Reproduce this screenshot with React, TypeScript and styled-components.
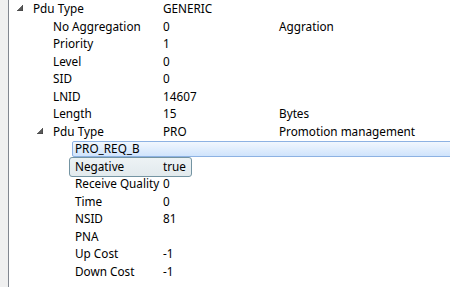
import styled, {createGlobalStyle, css} from "styled-components";

const GlobalStyle = createGlobalStyle`
  html, body {
    margin: 0;
    padding: 0;
    background: #fff;
  }
  body {
    font-family: "Noto Sans", "Open Sans", sans-serif;
    font-size: 11.75px;
    color: #000;
  }
`;

type Variant = "selected" | "focused";

interface Item {
  level: number;
  name: string;
  value?: string;
  desc?: string;
  expanded?: boolean;
  variant?: Variant;
}

const items: Item[] = [
  {level: 1, name: "Pdu Type", value: "GENERIC", expanded: true},
  {level: 2, name: "No Aggregation", value: "0", desc: "Aggration"},
  {level: 2, name: "Priority", value: "1"},
  {level: 2, name: "Level", value: "0"},
  {level: 2, name: "SID", value: "0"},
  {level: 2, name: "LNID", value: "14607"},
  {level: 2, name: "Length", value: "15", desc: "Bytes"},
  {level: 2, name: "Pdu Type", value: "PRO", desc: "Promotion management", expanded: true},
  {level: 3, name: "PRO_REQ_B", variant: "selected"},
  {level: 3, name: "Negative", value: "true", variant: "focused"},
  {level: 3, name: "Receive Quality", value: "0"},
  {level: 3, name: "Time", value: "0"},
  {level: 3, name: "NSID", value: "81"},
  {level: 3, name: "PNA"},
  {level: 3, name: "Up Cost", value: "-1"},
  {level: 3, name: "Down Cost", value: "-1"},
];

// label x position for each tree level, relative to the tree panel
const labelOffset: Record<number, number> = {1: 24, 2: 44, 3: 66};

const ExpandedArrow = () => (
  <svg width="6" height="6" viewBox="0 0 6 6">
    <path d="M6,0 L6,6 L0,6 Z" fill="#595959" stroke="#262626" strokeWidth="0.5"/>
  </svg>
);

export default function App() {
  return <Window>
    <GlobalStyle/>
    <Gutter/>
    <Tree>
      {items.map((item, i) => (
        <Row key={i} $variant={item.variant}>
          <NameCell $level={item.level}>
            <Expander>{item.expanded ? <ExpandedArrow/> : null}</Expander>
            <Label>{item.name}</Label>
          </NameCell>
          <Value>{item.value}</Value>
          <Desc>{item.desc}</Desc>
        </Row>
      ))}
    </Tree>
  </Window>
}

const Window = styled.div`
  display: flex;
  width: 450px;
  height: 287px;
  overflow: hidden;
  background: #fff;
`;

const Gutter = styled.div`
  width: 8px;
  flex: none;
  background: #f0f0f0;
  border-right: 1px solid #828790;
`;

const Tree = styled.div`
  flex: 1;
  display: flex;
  flex-direction: column;
`;

const selectedStyle = css`
  &::before {
    content: "";
    position: absolute;
    left: 63px;
    right: -4px;
    top: 1px;
    bottom: 0.5px;
    border: 1px solid #8db2e3;
    border-radius: 2px;
    background: linear-gradient(#f1f7fe, #d0e4fc);
  }
`;

const focusedStyle = css`
  &::before {
    content: "";
    position: absolute;
    left: 60px;
    width: 121px;
    top: -0.5px;
    bottom: -2px;
    border: 1px solid #7494a2;
    border-radius: 3px;
    background: linear-gradient(#edf3f5, #e2eaed);
  }
`;

const Row = styled.div<{ $variant?: Variant }>`
  position: relative;
  display: grid;
  grid-template-columns: 154px 116px 1fr;
  height: 17.5px;
  align-items: center;
  white-space: nowrap;
  line-height: 17.5px;
  ${p => p.$variant === "selected" && selectedStyle}
  ${p => p.$variant === "focused" && focusedStyle}
  & > * {
    position: relative;
  }
`;

const NameCell = styled.div<{ $level: number }>`
  display: flex;
  align-items: center;
  padding-left: ${p => labelOffset[p.$level] - 16}px;
  overflow: hidden;
`;

const Expander = styled.span`
  width: 16px;
  flex: none;
  display: flex;
  align-items: center;
  padding-left: 0;
  padding-bottom: 1px;
  box-sizing: border-box;
`;

const Label = styled.span``;

const Value = styled.span``;

const Desc = styled.span``;
